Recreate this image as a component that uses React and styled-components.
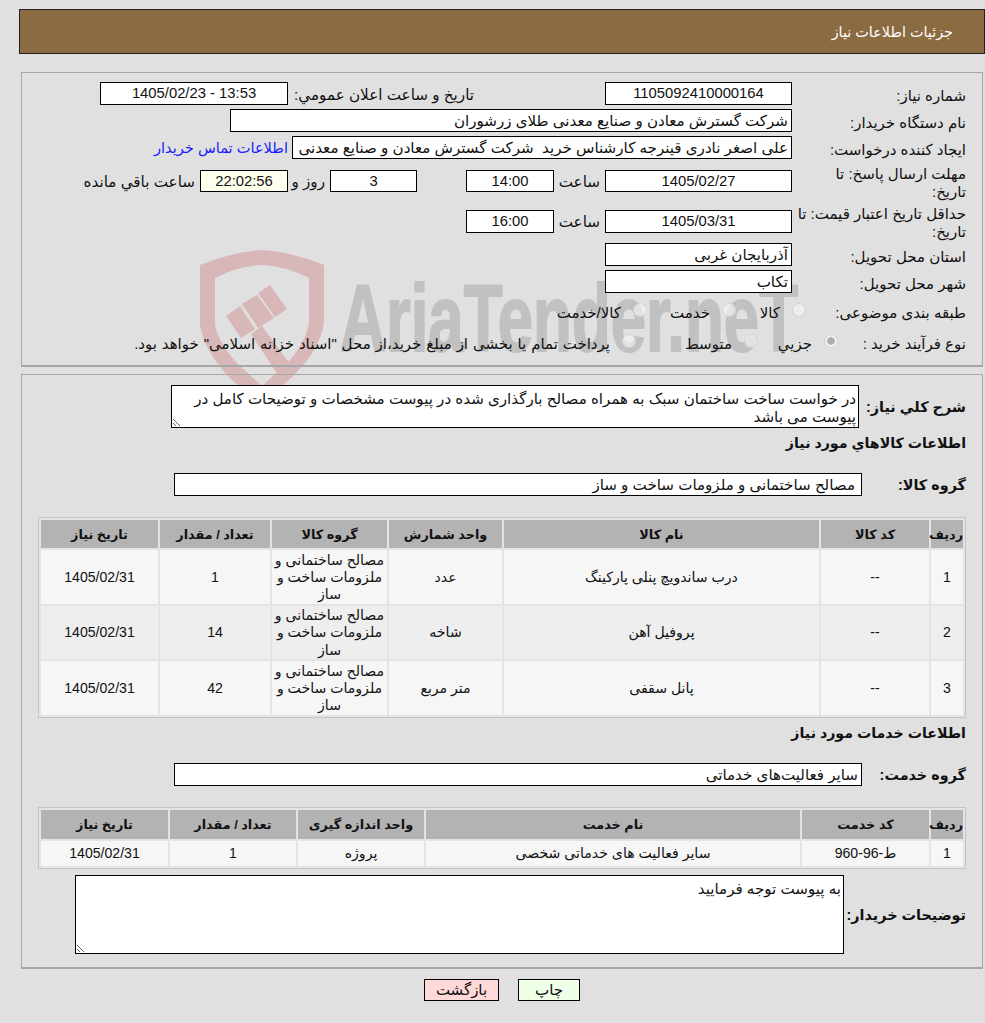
import React from "react";
import styled, { createGlobalStyle } from "styled-components";

const GlobalStyle = createGlobalStyle`
  html, body {
    margin: 0;
    padding: 0;
    background: #e0e0e0;
  }
  body {
    font-family: "Liberation Sans", "DejaVu Sans", sans-serif;
    font-size: 14px;
    color: #111;
  }
`;

const Page = styled.div`
  position: relative;
  direction: rtl;
  box-sizing: border-box;
  width: 985px;
  height: 1023px;
  padding: 9px 0 0 19px;
  overflow: hidden;
`;

const Watermark = styled.svg`
  position: absolute;
  left: 0;
  top: 0;
  direction: ltr;
`;

const Content = styled.div`
  position: relative;
`;

const Header = styled.div`
  box-sizing: border-box;
  height: 45px;
  line-height: 45px;
  padding-right: 31px;
  background: #8b6b41;
  border: 1px solid #222;
  color: #fff;
  font-size: 14.4px;
`;

const Panel = styled.div`
  box-sizing: border-box;
  width: 962px;
  margin: ${(p) => p.$top}px 2px 0;
  height: ${(p) => p.$height}px;
  padding: ${(p) => p.$pad}px 16px 0;
  border: 1px solid #a6a6a6;
  border-bottom-width: 2px;
`;

const Rows = styled.div`
  display: flex;
  flex-direction: column;
  gap: 4px;
`;

const Row = styled.div`
  display: flex;
  align-items: center;
  min-height: ${(p) => p.$h || 23}px;
  margin-top: ${(p) => p.$mt || 0}px;
`;

const Label = styled.div`
  box-sizing: border-box;
  flex: none;
  width: ${(p) => p.$w || 174}px;
  padding: 2px 0 0 3px;
  margin-bottom: -2px;
  font-size: 15px;
  line-height: 18px;
`;

const BoldLabel = styled.div`
  flex: none;
  width: ${(p) => p.$w}px;
  font-size: 14.4px;
  font-weight: 700;
  line-height: 18px;
  white-space: nowrap;
`;

const Heading = styled.div`
  font-size: 14.2px;
  font-weight: 700;
  line-height: 20px;
  margin-top: ${(p) => p.$mt}px;
`;

const Field = styled.div`
  box-sizing: border-box;
  flex: none;
  width: ${(p) => p.$w}px;
  height: ${(p) => p.$h || 23}px;
  line-height: ${(p) => (p.$h || 23) - 2}px;
  margin-right: ${(p) => p.$mr || 0}px;
  padding: 0 ${(p) => p.$pr || 3}px 0 3px;
  background: ${(p) => p.$bg || "#fff"};
  border: 1px solid #000;
  font-size: ${(p) => (p.$center ? 14.8 : 15.1)}px;
  text-align: ${(p) => (p.$center ? "center" : "right")};
  white-space: pre;
  overflow: hidden;
`;

const Text = styled.div`
  flex: none;
  box-sizing: border-box;
  width: ${(p) => (p.$w ? `${p.$w}px` : "auto")};
  margin-right: ${(p) => p.$mr || 0}px;
  padding-top: 2px;
  font-size: 15.2px;
  white-space: nowrap;
`;

const BuyerLink = styled.a`
  flex: none;
  margin-right: 4px;
  color: #1a1aff;
  font-size: 14.6px;
  text-decoration: none;
  white-space: nowrap;
`;

const Option = styled.label`
  flex: none;
  display: flex;
  align-items: center;
  gap: 12px;
  box-sizing: border-box;
  width: ${(p) => (p.$w ? `${p.$w}px` : "auto")};
  padding-top: 4px;
  font-size: 15px;
  word-spacing: ${(p) => p.$ws || 0}px;
  white-space: nowrap;
`;

const Radio = styled.input.attrs({ type: "radio", disabled: true })`
  appearance: none;
  flex: none;
  box-sizing: border-box;
  width: 14px;
  height: 14px;
  margin: 0 0 7px;
  border-radius: 50%;
  border: 1px solid rgba(205, 205, 205, 0.8);
  background: rgba(245, 245, 245, 0.65);
  &:checked {
    background: radial-gradient(circle, #adadad 0 3.5px, rgba(245, 245, 245, 0.8) 4px);
  }
`;

const Note = styled.textarea`
  box-sizing: border-box;
  flex: none;
  display: block;
  width: ${(p) => p.$w}px;
  height: ${(p) => p.$h}px;
  padding: 4px 2px 0 3px;
  margin: 0;
  border: 1px solid #000;
  border-radius: 0;
  outline: none;
  background: #fff;
  color: #111;
  font-family: inherit;
  font-size: 15.1px;
  line-height: 18px;
`;

const Grid = styled.table`
  box-sizing: border-box;
  width: 928px;
  margin-top: ${(p) => p.$mt}px;
  table-layout: fixed;
  border-collapse: separate;
  border-spacing: 2px;
  border: 1px solid #c4c4c4;
  background: #e4e4e4;
`;

const Head = styled.th`
  height: ${(p) => p.$h}px;
  padding: 0;
  background: #b3b3b3;
  font-size: 12.8px;
  font-weight: 700;
  text-align: center;
`;

const Cell = styled.td`
  box-sizing: border-box;
  height: ${(p) => p.$h}px;
  padding: 1px 2px 0;
  background: ${(p) => (p.$alt ? "#eeeeee" : "#f6f6f6")};
  font-size: 14.1px;
  line-height: 17.3px;
  text-align: center;
`;

const Buttons = styled.div`
  display: flex;
  justify-content: center;
  gap: 19px;
  width: 966px;
  margin-top: 10px;
`;

const Button = styled.button`
  box-sizing: border-box;
  width: ${(p) => p.$w}px;
  height: 22px;
  padding: 0;
  background: ${(p) => p.$bg};
  border: 1px solid #000;
  color: #111;
  font-family: inherit;
  font-size: 15px;
  line-height: 18px;
`;

const goods = [
  { id: 1, name: "درب ساندویچ پنلی پارکینگ", unit: "عدد", qty: 1, h: 54 },
  { id: 2, name: "پروفیل آهن", unit: "شاخه", qty: 14, h: 53 },
  { id: 3, name: "پانل سقفی", unit: "متر مربع", qty: 42, h: 54 },
];

const goodsCols = [32, 108, 315, 113, 115, 110, 117];
const serviceCols = [32, 127, 374, 126, 126, 127];

const AriaMark = () => (
  <Watermark width="985" height="410" viewBox="0 0 985 410">
    <text
      x="340"
      y="351"
      fontFamily="Liberation Sans, sans-serif"
      fontWeight="700"
      fontSize="94"
      fill="#c1c1c1"
      stroke="#c1c1c1"
      strokeWidth="2"
      textLength="458"
      lengthAdjust="spacingAndGlyphs"
    >
      AriaTender.neT
    </text>
    <g fill="#d8b7b9">
      <path d="M200 265 Q232 252 262 250 Q292 252 324 265 L324 322 Q320 350 293 376 L262 404 L232 380 Q204 352 200 325 Z M215 278 L215 325 Q219 345 240 366 L262 386 L286 364 Q306 344 309 322 L309 278 Q285 266 262 265 Q238 266 215 278 Z" fillRule="evenodd" />
      <path d="M226 316 L240 306 L255 329 L241 338 Z" />
      <path d="M242 304 L257 295 L274 318 L258 328 Z" />
      <path d="M258 293 L270 285 L287 309 L275 317 Z" />
      <path d="M251 334 L262 326 L296 372 L284 384 Z" />
    </g>
  </Watermark>
);

const App = () => (
  <Page>
    <GlobalStyle />
    <AriaMark />
    <Content>
      <Header>جزئیات اطلاعات نیاز</Header>

      <Panel $top={18} $height={295} $pad={9}>
        <Rows>
          <Row>
            <Label>شماره نیاز:</Label>
            <Field $w={187} $center>1105092410000164</Field>
            <Text $mr={131} $w={186}>تاریخ و ساعت اعلان عمومي:</Text>
            <Field $w={188} $center>13:53 - 1405/02/23</Field>
          </Row>
          <Row>
            <Label>نام دستگاه خریدار:</Label>
            <Field $w={562}>شرکت گسترش معادن و صنایع معدنی طلای زرشوران</Field>
          </Row>
          <Row>
            <Label>ایجاد کننده درخواست:</Label>
            <Field $w={500}>علی اصغر نادری قینرجه کارشناس خرید  شرکت گسترش معادن و صنایع معدنی</Field>
            <BuyerLink href="#">اطلاعات تماس خریدار</BuyerLink>
          </Row>
          <Row>
            <Label>مهلت ارسال پاسخ: تا<br />تاریخ:</Label>
            <Field $w={187} $h={22} $center>1405/02/27</Field>
            <Text $mr={5} $w={46}>ساعت</Text>
            <Field $w={88} $h={22} $center>14:00</Field>
            <Field $w={87} $h={22} $mr={49} $center>3</Field>
            <Text $mr={5} $w={37}>روز و</Text>
            <Field $w={88} $h={22} $bg="#ffffee" $center>22:02:56</Field>
            <Text $mr={5}>ساعت باقي مانده</Text>
          </Row>
          <Row>
            <Label>حداقل تاریخ اعتبار قیمت: تا<br />تاریخ:</Label>
            <Field $w={187} $center>1405/03/31</Field>
            <Text $mr={5} $w={46}>ساعت</Text>
            <Field $w={88} $center>16:00</Field>
          </Row>
          <Row>
            <Label>استان محل تحویل:</Label>
            <Field $w={187}>آذربایجان غربی</Field>
          </Row>
          <Row>
            <Label>شهر محل تحویل:</Label>
            <Field $w={187}>تکاب</Field>
          </Row>
          <Row $h={28}>
            <Label $w={160}>طبقه بندی موضوعی:</Label>
            <Option $w={70}><Radio name="kind" />کالا</Option>
            <Option $w={89}><Radio name="kind" />خدمت</Option>
            <Option><Radio name="kind" />کالا/خدمت</Option>
          </Row>
          <Row $h={26}>
            <Label $w={128}>نوع فرآیند خرید :</Label>
            <Option $w={80}><Radio name="size" defaultChecked />جزيي</Option>
            <Option $w={122}><Radio name="size" />متوسط</Option>
            <Option $ws={0.7}><Radio name="size" />پرداخت تمام یا بخشی از مبلغ خرید،از محل "اسناد خزانه اسلامی" خواهد بود.</Option>
          </Row>
        </Rows>
      </Panel>

      <Panel $top={7} $height={595} $pad={10}>
        <Row>
          <BoldLabel $w={107}>شرح كلي نياز:</BoldLabel>
          <Note $w={688} $h={43} readOnly defaultValue="در خواست ساخت ساختمان سبک به همراه مصالح بارگذاری شده در پیوست مشخصات و توضیحات کامل در پیوست می باشد" />
        </Row>
        <Heading $mt={5}>اطلاعات کالاهاي مورد نیاز</Heading>
        <Row $mt={20}>
          <BoldLabel $w={104}>گروه کالا:</BoldLabel>
          <Field $w={688} $pr={6}>مصالح ساختمانی و ملزومات ساخت و ساز</Field>
        </Row>
        <Grid $mt={21}>
          <colgroup>
            {goodsCols.map((w, i) => (
              <col key={i} width={w} />
            ))}
          </colgroup>
          <thead>
            <tr>
              <Head $h={28}>ردیف</Head>
              <Head $h={28}>کد کالا</Head>
              <Head $h={28}>نام کالا</Head>
              <Head $h={28}>واحد شمارش</Head>
              <Head $h={28}>گروه کالا</Head>
              <Head $h={28}>تعداد / مقدار</Head>
              <Head $h={28}>تاریخ نیاز</Head>
            </tr>
          </thead>
          <tbody>
            {goods.map((g) => (
              <tr key={g.id}>
                <Cell $h={g.h} $alt={g.id === 2}>{g.id}</Cell>
                <Cell $h={g.h} $alt={g.id === 2}>--</Cell>
                <Cell $h={g.h} $alt={g.id === 2}>{g.name}</Cell>
                <Cell $h={g.h} $alt={g.id === 2}>{g.unit}</Cell>
                <Cell $h={g.h} $alt={g.id === 2}>مصالح ساختمانی و ملزومات ساخت و ساز</Cell>
                <Cell $h={g.h} $alt={g.id === 2}>{g.qty}</Cell>
                <Cell $h={g.h} $alt={g.id === 2}>1405/02/31</Cell>
              </tr>
            ))}
          </tbody>
        </Grid>

        <Heading $mt={5}>اطلاعات خدمات مورد نیاز</Heading>
        <Row $mt={20}>
          <BoldLabel $w={104}>گروه خدمت:</BoldLabel>
          <Field $w={688}>سایر فعالیت‌های خدماتی</Field>
        </Row>
        <Grid $mt={21}>
          <colgroup>
            {serviceCols.map((w, i) => (
              <col key={i} width={w} />
            ))}
          </colgroup>
          <thead>
            <tr>
              <Head $h={29}>ردیف</Head>
              <Head $h={29}>کد خدمت</Head>
              <Head $h={29}>نام خدمت</Head>
              <Head $h={29}>واحد اندازه گیری</Head>
              <Head $h={29}>تعداد / مقدار</Head>
              <Head $h={29}>تاریخ نیاز</Head>
            </tr>
          </thead>
          <tbody>
            <tr>
              <Cell $h={25}>1</Cell>
              <Cell $h={25}>ط-96-960</Cell>
              <Cell $h={25}>سایر فعالیت های خدماتی شخصی</Cell>
              <Cell $h={25}>پروژه</Cell>
              <Cell $h={25}>1</Cell>
              <Cell $h={25}>1405/02/31</Cell>
            </tr>
          </tbody>
        </Grid>
        <Row $mt={6}>
          <BoldLabel $w={122}>توضیحات خریدار:</BoldLabel>
          <Note $w={769} $h={79} readOnly defaultValue="به پیوست توجه فرمایید" />
        </Row>
      </Panel>

      <Buttons>
        <Button $w={62} $bg="#efffe8">چاپ</Button>
        <Button $w={75} $bg="#ffd8d8">بازگشت</Button>
      </Buttons>
    </Content>
  </Page>
);

export default App;
